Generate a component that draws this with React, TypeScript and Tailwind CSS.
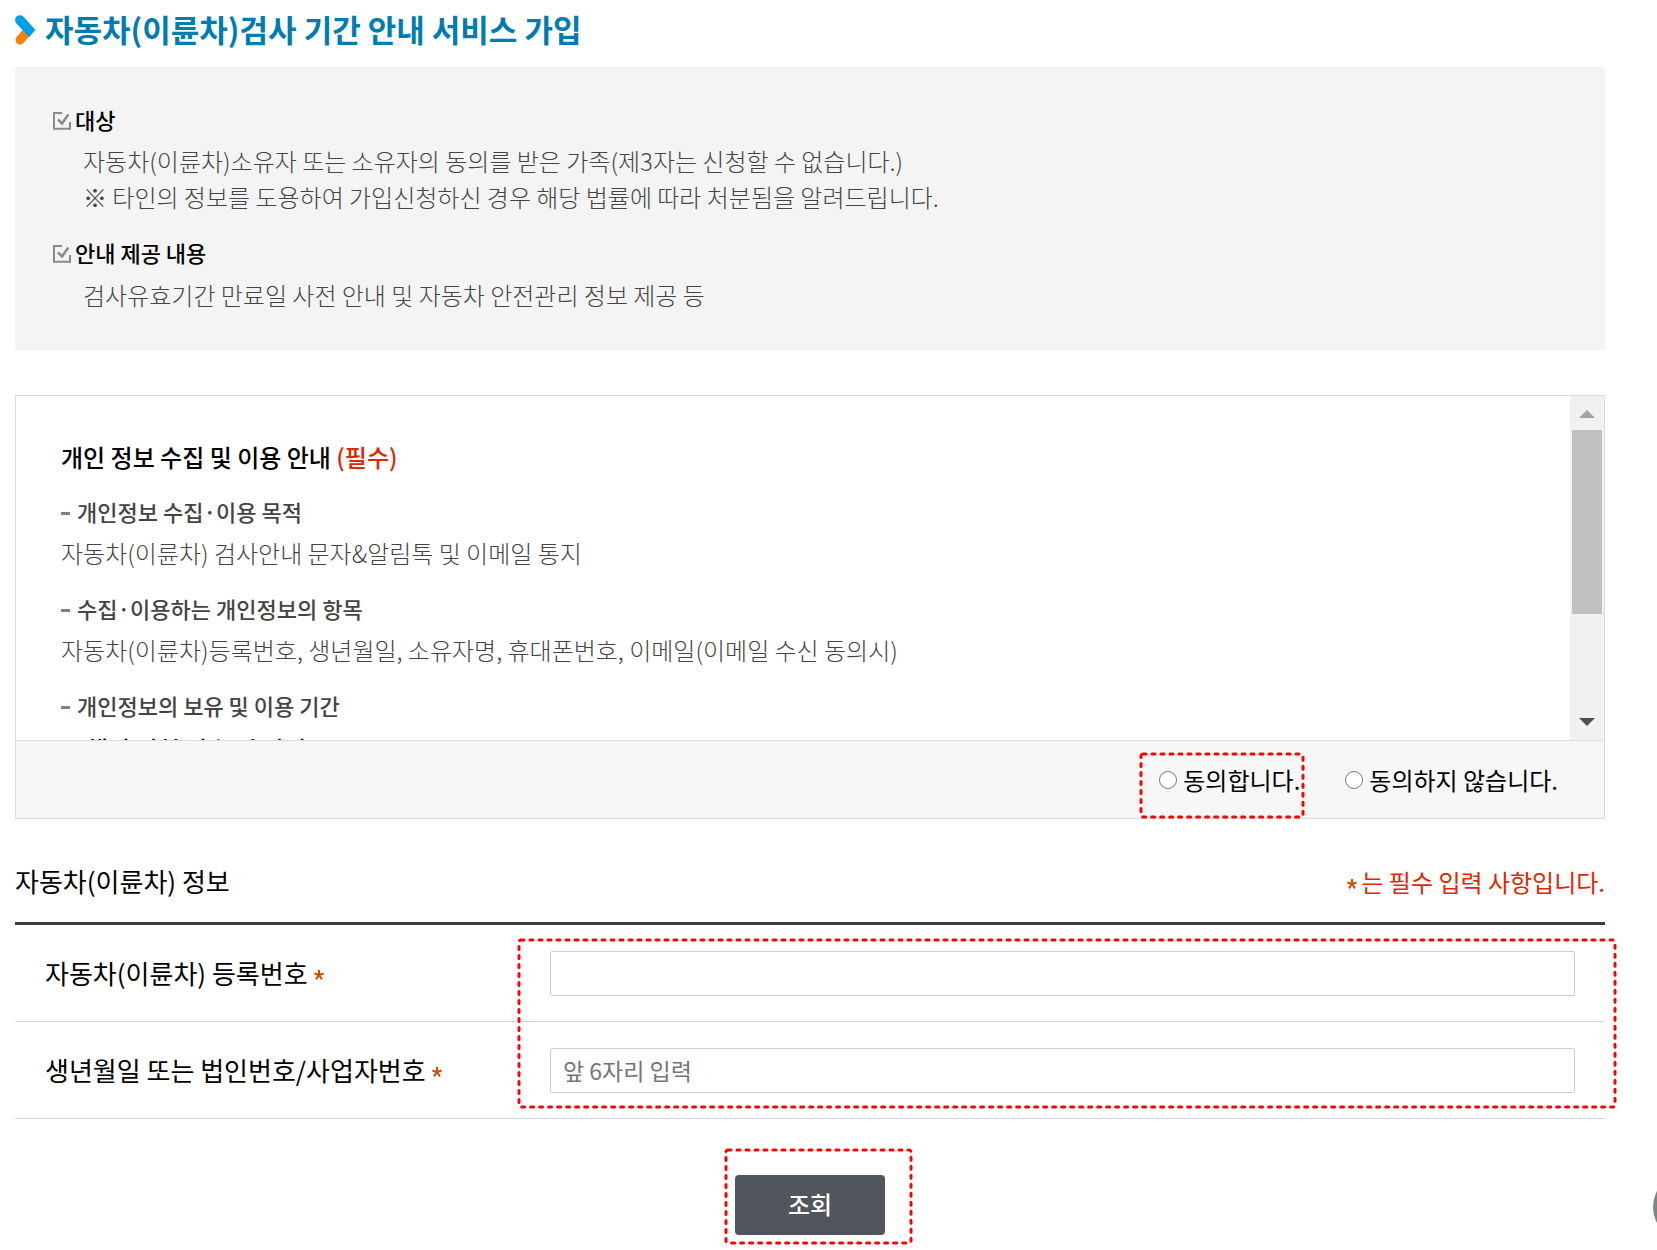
import { useState } from "react";

function DottedFrame({ className }: { className: string }) {
  return (
    <svg aria-hidden="true" className={`pointer-events-none absolute overflow-visible ${className}`}>
      <rect width="100%" height="100%" rx="2" fill="none" stroke="#ff0000" strokeWidth="3" strokeLinecap="round" strokeDasharray="3 6" />
    </svg>
  );
}

function CheckIcon() {
  return (
    <svg aria-hidden="true" className="mt-[3px] size-[18px] shrink-0" viewBox="0 0 18 18" fill="none" stroke="#8a8a8a" strokeWidth="2">
      <path d="M9 1H1v15.8h16V10" />
      <path d="M5 7.5l4 4L15.3 2.5" strokeWidth="2.5" />
    </svg>
  );
}

function Star() {
  return (
    <svg aria-hidden="true" className="mt-1 size-[10px] shrink-0" viewBox="0 0 10 10" stroke="#d04a00" strokeWidth="2">
      <path d="M5 5V0M5 5L0.4 3.5M5 5L9.6 3.5M5 5L2 9.4M5 5L8 9.4" />
    </svg>
  );
}

function InfoHeading({ children }: { children: string }) {
  return (
    <h2 className="flex items-center gap-1 text-[22px] leading-[36px] font-medium text-black">
      <CheckIcon />
      {children}
    </h2>
  );
}

function TermHeading({ children }: { children: string }) {
  return (
    <h3 className="mt-[19px] flex items-center gap-[7px] text-[22px] leading-[36px] font-medium text-[#444]">
      <span className="mt-1 h-[3px] w-[9px] bg-[#808080]" />
      {children}
    </h3>
  );
}

const radio = "size-[18px] appearance-none rounded-full border border-[#767676] bg-white checked:border-[5px] checked:border-[#0075ff]";
const field = "block h-[45px] w-full rounded-[2px] border border-[#ccced0] bg-white px-3 text-[23px] text-black placeholder:text-[#757575]";
const headCell = "border-b border-[#d6d6d6] pl-[30px] font-normal";
const fieldCell = "border-b border-[#d6d6d6] px-[30px]";

export default function App() {
  const [agree, setAgree] = useState("");
  return (
    <div className="relative min-h-screen overflow-hidden bg-white pr-[52px] pl-[15px] font-['Noto_Sans_CJK_KR',sans-serif] text-black">
      <h1 className="flex h-[67px] items-center gap-[9px] pb-[10px] text-[31px] leading-[40px] font-bold text-[#007cb0]">
        <svg aria-hidden="true" className="mt-[2px] h-[30px] w-[21px] shrink-0" viewBox="0 0 21 30">
          <path d="M5 25L12 17" stroke="#f58200" strokeWidth="9" strokeLinecap="round" />
          <path d="M1.3 8.2A4.8 4.8 0 0 1 8.6 1.8L20.5 15L14 22.2z" fill="#00a0e9" />
        </svg>
        자동차(이륜차)검사 기간 안내 서비스 가입
      </h1>

      <section className="bg-[#f4f4f4] px-[38px] pt-[34px] pb-[37px] text-2xl leading-[36px] font-light text-[#444]">
        <InfoHeading>대상</InfoHeading>
        <div className="mt-[6px] pl-[30px]">
          <p>자동차(이륜차)소유자 또는 소유자의 동의를 받은 가족(제3자는 신청할 수 없습니다.)</p>
          <p>※ 타인의 정보를 도용하여 가입신청하신 경우 해당 법률에 따라 처분됨을 알려드립니다.</p>
        </div>
        <div className="mt-[19px]">
          <InfoHeading>안내 제공 내용</InfoHeading>
          <p className="mt-[7px] pl-[30px]">검사유효기간 만료일 사전 안내 및 자동차 안전관리 정보 제공 등</p>
        </div>
      </section>

      <form>
        <section className="mt-[45px] border border-[#dcdcdc]">
          <div className="flex h-[344px]">
            <div className="grow overflow-hidden px-[45px] pt-[43px] text-2xl leading-[36px] font-light text-[#444]">
              <h2 className="leading-[35px] font-medium text-black">
                개인 정보 수집 및 이용 안내 <span className="text-[#e22600]">(필수)</span>
              </h2>
              <TermHeading>개인정보 수집·이용 목적</TermHeading>
              <p className="mt-[6px]">자동차(이륜차) 검사안내 문자&amp;알림톡 및 이메일 통지</p>
              <TermHeading>수집·이용하는 개인정보의 항목</TermHeading>
              <p className="mt-[6px]">자동차(이륜차)등록번호, 생년월일, 소유자명, 휴대폰번호, 이메일(이메일 수신 동의시)</p>
              <TermHeading>개인정보의 보유 및 이용 기간</TermHeading>
              <p className="mt-2 pl-[25px] font-medium text-black">해지 신청 접수 시 까지</p>
            </div>
            <div aria-hidden="true" className="flex w-[34px] shrink-0 flex-col items-center bg-[#f1f1f1]">
              <svg className="h-[34px] w-[34px]" viewBox="0 0 34 34"><path d="M9 22L17 14L25 22z" fill="#a3a3a3" /></svg>
              <div className="h-[184px] w-[30px] bg-[#c1c1c1]" />
              <svg className="mt-auto h-[34px] w-[34px]" viewBox="0 0 34 34"><path d="M9 12L17 20L25 12z" fill="#505050" /></svg>
            </div>
          </div>
          <div className="flex h-[78px] items-center justify-end gap-[45px] border-t border-[#dcdcdc] bg-[#f7f7f7] pr-[46px] text-2xl">
            <div className="relative">
              <label className="flex items-center gap-[6px]">
                <input type="radio" name="agree" className={radio} checked={agree === "yes"} onChange={() => setAgree("yes")} />
                동의합니다.
              </label>
              <DottedFrame className="-top-[10px] -left-[18px] h-[63px] w-[162px]" />
            </div>
            <label className="flex items-center gap-[6px]">
              <input type="radio" name="agree" className={radio} checked={agree === "no"} onChange={() => setAgree("no")} />
              동의하지 않습니다.
            </label>
          </div>
        </section>

        <div className="mt-[42px] flex items-center justify-between">
          <h2 className="pb-[21px] text-[26px] leading-[40px]">자동차(이륜차) 정보</h2>
          <p className="flex items-center gap-1 pb-5 text-2xl leading-[40px] text-[#e22600]">
            <Star />는 필수 입력 사항입니다.
          </p>
        </div>

        <div className="relative">
          <table className="w-full table-fixed border-separate border-spacing-0 border-t-[3px] border-[#383d48] text-left">
            <colgroup>
              <col className="w-[505px]" />
              <col />
            </colgroup>
            <tbody>
              <tr className="h-[97px]">
                <th scope="row" className={headCell}>
                  <label htmlFor="plate" className="flex items-center gap-[6px] text-[26px] leading-[40px]">
                    자동차(이륜차) 등록번호 <Star />
                  </label>
                </th>
                <td className={fieldCell}>
                  <input id="plate" type="text" className={field} />
                </td>
              </tr>
              <tr className="h-[97px]">
                <th scope="row" className={headCell}>
                  <label htmlFor="birth" className="flex items-center gap-[6px] text-[26px] leading-[40px]">
                    생년월일 또는 법인번호/사업자번호 <Star />
                  </label>
                </th>
                <td className={fieldCell}>
                  <input id="birth" type="text" placeholder="앞 6자리 입력" className={field} />
                </td>
              </tr>
            </tbody>
          </table>
          <DottedFrame className="top-[18px] -right-[10px] h-[167px] w-[calc(100%-494px)]" />
        </div>

        <div className="mt-14 flex justify-center">
          <div className="relative">
            <button type="button" className="h-[60px] w-[150px] rounded bg-[#51555c] pb-[2px] text-2xl font-medium text-white">조회</button>
            <DottedFrame className="-top-[25px] -left-[9px] h-[93px] w-[185px]" />
          </div>
        </div>
      </form>

      <button type="button" aria-label="맨 위로" className="absolute -right-16 bottom-[9px] size-[68px] rounded-full bg-[#808482]" />
    </div>
  );
}
